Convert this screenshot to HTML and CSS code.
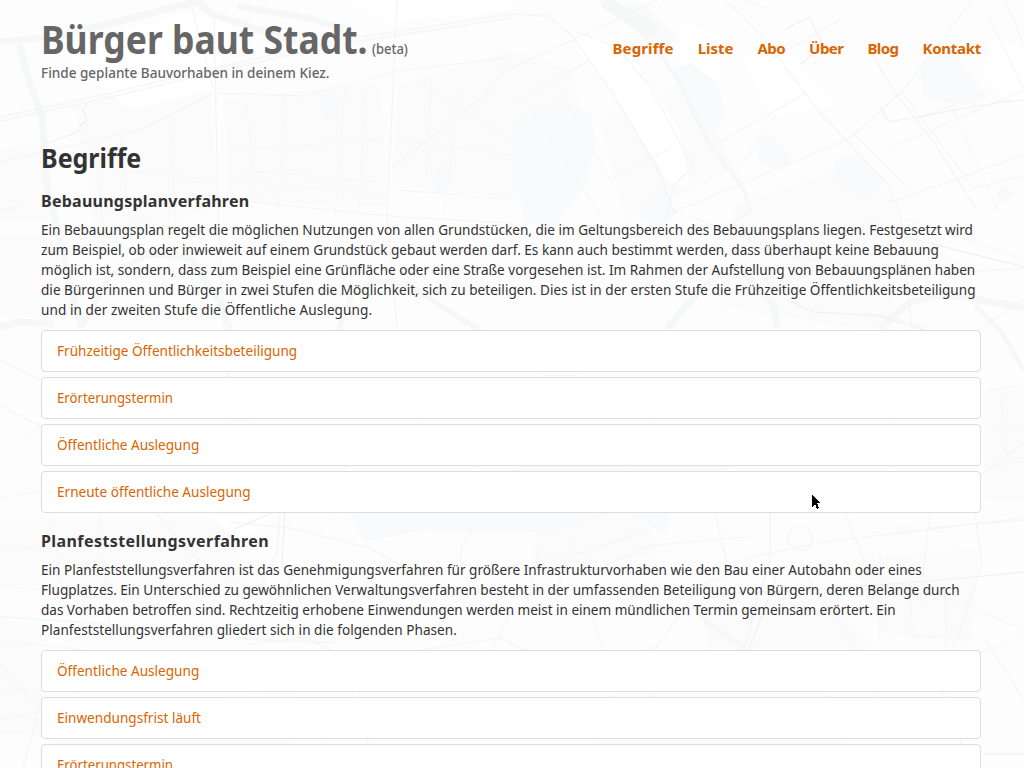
FILE: index.html
```html
<!DOCTYPE html>
<html lang="de">
<head>
<meta charset="utf-8">
<title>Begriffe – Bürger baut Stadt.</title>
<link rel="stylesheet" href="styles.css">
</head>
<body>
<svg class="map" viewBox="0 0 1024 768" aria-hidden="true">
  <rect width="1024" height="768" fill="#fdfdfd"/>
  <g fill="#fbfbfb">
    <path d="M75 105L210 88 218 205 98 250zM225 100l155-18 8 125-160-5zM398 85l114-34 60 20 20 90-80 40-120-20zM0 150l38-7 12 78H0zM0 235h55l23 80H0zM735 205l120-40 45 40-10 130-170-30zM600 120l90-40 45 90-110 50z"/>
    <path d="M0 520h230l20 70-250-5zM0 620l40 5 10 110H0zM540 515l100-2 20 40-130 22zM700 600h130l50 50-170 5zM850 560l130-12-10 95-90-10zM985 390h39v110h-39zM300 690l-10 78H50l10-58zM620 665l190-30 40 133H590z"/>
  </g>
  <g fill="#fff">
    <path d="M242 0h105l40 22 125-12V0zM235 18L190 12 60 50l70 60 82-20zM570 40l38 50 62 92 20 5-12-60-60-90zM742 60l40-20 50 64-60 14zM680 20l45 20-15 70-30-20zM285 513l-48 28-30-28zM990 35l34 15v60l-40-30z"/>
  </g>
  <g fill="#f9fafb">
    <path d="M513 120l45-20 32 13 6 32-10 38-32 44-30-6-12-63zM640 200l25-7 13 20-18 14-20-9zM920 65l30-16 36 46-12 10-50-6zM670 70l20-7 28 20 8 35-20 18-18-36zM755 143l15-10 24 24-12 13-22-7zM995 195l8-11 12 9-11 11zM318 90l18-5 2 28-14 12zM440 165l13 3-5 27-15-3zM605 6l40-2 35 35-25 8zM835 160l25-8 25 30-20 14-30-12z"/>
    <path d="M350 513h170l100-2-60 19-47 4-90-4-60 12zM515 466h220l-10 5H510zM630 514h40l-5 20zM900 524l15 3-3 9-14-3z"/>
  </g>
  <g class="water">
    <path d="M0 42L65 35l90-23 48-12" stroke-width="7"/>
    <path d="M19 44l11 40 12 32 5 70 25 105 9 34" stroke-width="7"/>
    <path d="M196 0l16 14 84 28M237 6l77 13 30 11" stroke-width="7"/>
    <path d="M80 329l30-53 38-22 43 5 30 45 14 35M335 338l17-44 21-13 34 3 70 45 18 30" stroke-width="6"/>
    <path d="M600 0l38 29 28 33 15 23 26 56 36 47 7 22-20 16" stroke-width="4"/>
    <path d="M604 2l24 14 22 11 4 8" stroke-width="12"/>
    <path d="M667 328l26-30 28-26h22l30 32 4 24M880 329l30-27 37-8 77 14M0 327l20-5 34 2" stroke-width="7"/>
    <path d="M975 305l25 25 24 40M690 605l20 20 32 21 2 22" stroke-width="5"/>
    <path d="M230 522l60 6 80 20 50 28" stroke-width="2"/>
  </g>
  <g class="rails">
    <path d="M0 117l42-9 65-14 100-24 120-28 185-28M0 121l42-9 65-14 100-24 120-28 185-28"/>
    <path d="M512 14l36 2 24 20 41 58 42 70 20 50M0 617l80 5 140 16 120 5"/>
    <path d="M870 50l22 38 12 16 28 36 45 70M280 512l-3 40-18 38-8 28M770 513v50l-14 40-15 60M985 754h39"/>
  </g>
  <g class="roads">
    <path d="M0 162l140-32 74-37 90 3 95-25 113-14M214 12l4 200 10 180M190 0l23 88M397 0l-10 218 10 110M0 210l20-3M250 202l150 15 112 6M392 168l93-73 27-35"/>
    <path d="M512 68l146-68M572 30l44 17 33 38 44 82-19 18-8 35M660 218l190-80 53-47L972 0M725 0l35 34 58 76 70 75 12 25 12 120M888 203l136-48M1005 0l19 45M745 0l20 8M900 90l74 98 50-12"/>
    <path d="M0 405l42 22M0 498l42-7M155 512l40 45 60 35M715 513l12 50 90-20 207-25M800 565l60 90 32 73M845 513l20 50M930 513l-10 90M480 520l-18 24-2 18 17 8 50-6 60-12 80-30M605 565l50-20 95-8M655 650l45-65 30-10M1024 520l-94 8M0 720l38-8-15 56M0 665l40 43"/>
    <path d="M245 645l60-8 35 18 35 110M420 650l80-12 60 28 60-4 40-18M512 610l-20 40-45 40M970 768l-30-85 22-60 20-60-12-80 54-40M985 640l39 60"/>
    <path d="M600 330l-20 15M690 216l100 40 120 20 114-8M820 312l60 3 50 13M980 329l44-30M990 390l34-5"/>
    <circle cx="800" cy="538" r="12"/>
  </g>
  <g class="streets">
    <path d="M95 145l10 100M120 130l12 117M170 113l8 150M245 92l12 110M285 92l-6 115M345 90l-10 128M365 90l-6 120M432 75l-6 100M460 90l-18 135M110 170l270 24M75 200l130 40M230 150l150-10M243 170l135 12M405 140l107 15M400 190l112 10M415 80l97 60"/>
    <path d="M525 100l75 115M550 70l60 110M590 60l-77 44M610 180l60-32M705 150l100-56M730 180l45-64M770 60l70-40M812 65l45-35M850 130l60 60M915 120l75-30M885 150l139-60M948 100l50 110M985 10l39 80M870 220l100 50M910 220l114 40"/>
    <path d="M0 550l100-5M0 585l160 20M50 513l15 95M100 513l10 120M0 640l100 12M0 690l80 2M575 535l-20 60M540 545l-15 70M590 610l20 60M850 580l60-12 2 70 60-4M880 550v88M945 580l2 130M955 600l69 30M975 655l49-20M0 360l40 20M25 440l17-15M990 430l34-6M995 465l29-3M1000 390l8 85"/>
    <path d="M230 420h20M420 422l80 60M360 424l-30 90M650 422l-20 50M890 422v90M700 470l20 44M540 375h40M650 695l-20 73M340 695l-20 73"/>
  </g>
  <g class="dark">
    <path d="M88 102l-5 8 4 10-7 6v5l-37 14M785 29l24-12 14 28-22 19M880 106l9 16 32-6 80-14 23-2M712 594l100-4 130-10 82-8M905 237l119 30M788 300l25 12 65 4 47 14"/>
    <path d="M235 529l50-22-3 58 9 16-28 35M776 578l-28 74-18 18"/>
  </g>
</svg>
<div class="page">
  <header class="header">
    <div class="brand">
      <div class="brand-line"><a class="brand-name">Bürger baut Stadt.</a><span class="beta">(beta)</span></div>
      <div class="claim">Finde geplante Bauvorhaben in deinem Kiez.</div>
    </div>
    <nav class="nav"><a class="wide">Begriffe</a><a>Liste</a><a class="tight">Abo</a><a class="tight">Über</a><a class="tight">Blog</a><a class="snug">Kontakt</a></nav>
  </header>
  <main>
    <h1>Begriffe</h1>
    <section>
      <h2>Bebauungsplanverfahren</h2>
      <p>Ein Bebauungsplan regelt die möglichen Nutzungen von allen Grundstücken, die im Geltungsbereich des Bebauungsplans liegen. Festgesetzt wird<br>zum Beispiel, ob oder inwieweit auf einem Grundstück gebaut werden darf. Es kann auch bestimmt werden, dass überhaupt keine Bebauung<br>möglich ist, sondern, dass zum Beispiel eine Grünfläche oder eine Straße vorgesehen ist. Im Rahmen der Aufstellung von Bebauungsplänen haben<br><span class="loose-1">die Bürgerinnen und Bürger in zwei Stufen die Möglichkeit, sich zu beteiligen. Dies ist in der ersten Stufe die Frühzeitige Öffentlichkeitsbeteiligung</span><br><span class="loose-3">und in der zweiten Stufe die Öffentliche Auslegung.</span></p>
      <ul class="terms">
        <li><a>Frühzeitige Öffentlichkeitsbeteiligung</a></li>
        <li><a class="condensed">Erörterungstermin</a></li>
        <li><a>Öffentliche Auslegung</a></li>
        <li><a>Erneute öffentliche Auslegung</a></li>
      </ul>
    </section>
    <section>
      <h2 class="open">Planfeststellungsverfahren</h2>
      <p>Ein Planfeststellungsverfahren ist das Genehmigungsverfahren für größere Infrastrukturvorhaben wie den Bau einer Autobahn oder eines<br>Flugplatzes. Ein Unterschied zu gewöhnlichen Verwaltungsverfahren besteht in der umfassenden Beteiligung von Bürgern, deren Belange durch<br><span class="close">das Vorhaben betroffen sind. Rechtzeitig erhobene Einwendungen werden meist in einem mündlichen Termin gemeinsam erörtert. Ein</span><br><span class="loose-2">Planfeststellungsverfahren gliedert sich in die folgenden Phasen.</span></p>
      <ul class="terms">
        <li><a>Öffentliche Auslegung</a></li>
        <li><a>Einwendungsfrist läuft</a></li>
        <li><a class="condensed">Erörterungstermin</a></li>
      </ul>
    </section>
  </main>
</div>
<svg class="cursor" viewBox="0 0 9 15" aria-hidden="true"><path d="M0 0l8 8H5l2 5-2 1-2-5-3 3z" fill="#000" shape-rendering="crispEdges"/></svg>
</body>
</html>
```
FILE: styles.css
```css
* { box-sizing: border-box; }
html, body { height: 768px; overflow: hidden; }
body {
  margin: 0;
  background: #fdfdfd;
  color: #333;
  font: 14px/20px "Noto Sans", "Open Sans", sans-serif;
}
.map { position: absolute; inset: 0; z-index: -1; width: 1024px; height: 768px; }
.map g { stroke-linejoin: round; }
.water, .rails, .roads, .streets, .dark { fill: none; }
.water { stroke: #f6f8f7; }
.rails { stroke: #f1f1f1; stroke-width: 2; stroke-dasharray: 1 1; }
.roads { stroke: #f5f5f5; stroke-width: 1.2; }
.streets { stroke: #f8f8f8; stroke-width: 1.5; }
.dark { stroke: #f0f0f0; stroke-width: 1.2; }

.page { width: 940px; margin-left: 41px; }
.header { display: flex; justify-content: space-between; height: 140px; padding-top: 19px; color: #666; }
.brand { width: 400px; }
.brand-line { display: flex; align-items: baseline; height: 43px; line-height: 40px; white-space: nowrap; }
.brand-name, .beta, .claim, h1, p, .terms a { transform-origin: left center; }
.brand-name { width: 331px; font-size: 40px; font-weight: 700; transform: scaleX(.888); }
.beta { font-size: 14px; font-weight: 500; transform: scaleX(.925); }
.claim { font-size: 15px; font-weight: 500; white-space: nowrap; transform: scaleX(.902); }
.nav { display: flex; gap: 24px; padding-top: 19px; color: #d96500; font-size: 15px; font-weight: 700; }
.nav .wide { letter-spacing: .12px; }
.nav .tight { letter-spacing: -.55px; }
.nav .snug { letter-spacing: -.27px; }
h1 { margin: 0 0 13px; font-size: 26px; line-height: 36px; transform: scaleX(.962); }
h2 { margin: 0 0 7px; font-size: 16px; line-height: 24px; letter-spacing: .25px; }
h2.open { letter-spacing: .42px; }
p { margin: 0 0 10px; white-space: nowrap; transform: scaleX(.969); }
.loose-1 { letter-spacing: .025px; }
.loose-2 { letter-spacing: .035px; }
.loose-3 { letter-spacing: .08px; }
.close { letter-spacing: -.03px; }
.terms { display: flex; flex-direction: column; gap: 5px; margin: 0 0 16px; padding: 0; list-style: none; }
.terms li { height: 42px; padding: 10px 15px; border: 1px solid #ddd; border-radius: 4px; background: #fff; color: #d96500; }
.terms a { display: inline-block; transform: scaleX(.97); }
.terms .condensed { transform: scaleX(.943); }
.cursor { position: absolute; left: 812px; top: 495px; width: 9px; height: 15px; }
```
